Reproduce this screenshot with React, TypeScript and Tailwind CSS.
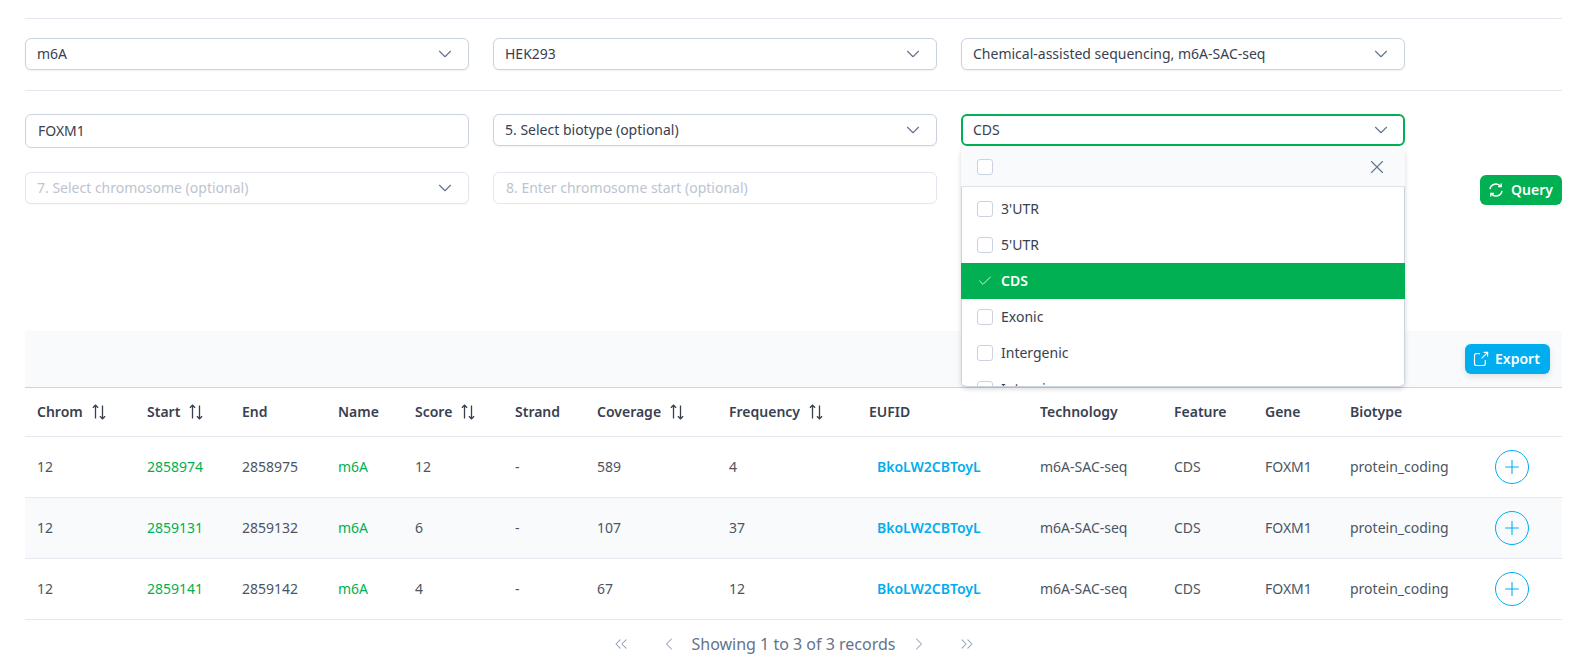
import { ChevronDown, ChevronLeft, ChevronRight, ChevronsLeft, ChevronsRight, Check, Plus, X } from "lucide-react";

const columns = [
    { label: "Chrom", width: 110, sort: true },
    { label: "Start", width: 95, sort: true },
    { label: "End", width: 96 },
    { label: "Name", width: 77 },
    { label: "Score", width: 100, sort: true },
    { label: "Strand", width: 82 },
    { label: "Coverage", width: 132, sort: true },
    { label: "Frequency", width: 140, sort: true },
    { label: "EUFID", width: 171 },
    { label: "Technology", width: 134 },
    { label: "Feature", width: 91 },
    { label: "Gene", width: 85 },
    { label: "Biotype", width: 132 },
    { label: "", width: 92 },
];

const rows = [
    { start: "2858974", end: "2858975", score: "12", coverage: "589", frequency: "4" },
    { start: "2859131", end: "2859132", score: "6", coverage: "107", frequency: "37" },
    { start: "2859141", end: "2859142", score: "4", coverage: "67", frequency: "12" },
];

const options = ["3'UTR", "5'UTR", "CDS", "Exonic", "Intergenic", "Intronic"];

function SortIcon() {
    return (
        <svg width="16" height="16" viewBox="0 0 16 16" fill="none" stroke="#374151" strokeWidth="1.3" className="ml-2 shrink-0">
            <path d="M4.5 14.5V1.2M1.9 3.8l2.6-2.6 2.6 2.6" />
            <path d="M11.5 1.5V14.8M8.9 12.2l2.6 2.6 2.6-2.6" />
        </svg>
    );
}

function SyncIcon() {
    return (
        <svg width="16" height="16" viewBox="0 0 16 16" fill="none" stroke="currentColor" strokeWidth="1.4" className="shrink-0">
            <path d="M2 7.2A6 6 0 0 1 12.6 4.2" />
            <path d="M13.2 1.4v3.2H10" />
            <path d="M14 8.8A6 6 0 0 1 3.4 11.8" />
            <path d="M2.8 14.6v-3.2H6" />
        </svg>
    );
}

function ExportIcon() {
    return (
        <svg width="16" height="16" viewBox="0 0 16 16" fill="none" stroke="currentColor" strokeWidth="1.2" className="shrink-0">
            <path d="M7 2.6H3.2A1.7 1.7 0 0 0 1.5 4.3v8.5a1.7 1.7 0 0 0 1.7 1.7h7.4a1.7 1.7 0 0 0 1.7-1.7V9" />
            <path d="M8.6 7.4 14.2 1.8M10.6 1.4h4v4" />
        </svg>
    );
}

function Select({ text, disabled, focused }: { text: string; disabled?: boolean; focused?: boolean }) {
    return (
        <div
            className={`flex h-8 w-[444px] items-center justify-between rounded-md bg-white text-sm ${
                focused
                    ? "border-2 border-[#00b052] pl-[10px] pr-[11px] text-[#374151]"
                    : disabled
                      ? "border border-[#e2e6ee] pl-[11px] pr-3 text-[#bcc4d1] shadow-[0_1px_2px_rgba(0,0,0,0.04)]"
                      : "border border-[#cbd2e0] pl-[11px] pr-3 text-[#374151] shadow-[0_1px_2px_rgba(0,0,0,0.06)]"
            }`}
        >
            <span>{text}</span>
            <ChevronDown size={22} strokeWidth={1.25} className="text-[#64748b]" />
        </div>
    );
}

function Box() {
    return <span className="h-4 w-4 shrink-0 rounded-[3px] border border-[#cbd2e0] bg-white" />;
}

function BiotypeMenu() {
    return (
        <div className="absolute left-0 top-[33px] z-10 h-[240px] w-[444px] overflow-hidden rounded-md border-b border-[#cbd2e0] bg-white text-sm text-[#374151] shadow-[0_2px_5px_rgba(0,0,0,0.16)]">
            <div className="flex h-[40px] items-center justify-between border-b border-[#dfe3ea] bg-[#f9fafc] pl-4 pr-[17px]">
                <Box />
                <X size={22} strokeWidth={1.25} className="text-[#64748b]" />
            </div>
            <div className="h-[200px] border-x border-[#cbd2e0] pt-1">
                {options.map((o) =>
                    o === "CDS" ? (
                        <div key={o} className="-mx-px flex h-9 items-center gap-2 bg-[#00b052] pl-4 font-semibold text-white">
                            <Check size={16} strokeWidth={1.25} />
                            {o}
                        </div>
                    ) : (
                        <div key={o} className="-ml-px flex h-9 items-center gap-2 pl-4">
                            <Box />
                            {o}
                        </div>
                    ),
                )}
            </div>
        </div>
    );
}

export default function App() {
    return (
        <div className="min-h-[670px] bg-white pl-[25px] pr-[26px] pt-[18px] font-['Noto_Sans',sans-serif] text-sm">
            <div className="flex gap-6 border-t border-[#e3e8f1] pb-5 pt-[19px]">
                <Select text="m6A" />
                <Select text="HEK293" />
                <Select text="Chemical-assisted sequencing, m6A-SAC-seq" />
            </div>

            <div className="border-t border-[#e3e8f1] pt-[23px]">
                <div className="flex items-start gap-6">
                    <div className="flex h-[34px] w-[444px] items-center rounded-md border border-[#cbd2e0] pl-3 text-[#374151]">FOXM1</div>
                    <Select text="5. Select biotype (optional)" />
                    <div className="relative">
                        <Select text="CDS" focused />
                        <BiotypeMenu />
                    </div>
                </div>
                <div className="mt-6 flex items-start gap-6">
                    <Select text="7. Select chromosome (optional)" disabled />
                    <div className="flex h-8 w-[444px] items-center rounded-md border border-[#e2e6ee] pl-3 text-[#bcc4d1]">
                        8. Enter chromosome start (optional)
                    </div>
                    <button className="ml-auto mt-[3px] flex h-[30px] w-[82px] items-center gap-[7px] rounded-md bg-[#00b052] pl-2 font-semibold text-white">
                        <SyncIcon />
                        Query
                    </button>
                </div>
            </div>

            <div className="mt-[126px] flex h-[57px] items-center justify-end border-b border-[#cbd2e0] bg-[#f9fafc] pr-[12px]">
                <button className="flex h-[30px] w-[85px] items-center gap-[6px] rounded-md bg-[#00adef] pl-2 font-semibold text-white shadow-[0_3px_6px_rgba(0,0,0,0.1)]">
                    <ExportIcon />
                    Export
                </button>
            </div>

            <table className="w-[1537px] table-fixed border-collapse">
                <colgroup>
                    {columns.map((c, i) => (
                        <col key={i} width={c.width} />
                    ))}
                </colgroup>
                <thead>
                    <tr className="h-[48px] border-b border-[#e3e8f1]">
                        {columns.map((c, i) => (
                            <th key={i} className="px-3 text-left font-semibold text-[#374151]">
                                <span className="flex items-center">
                                    {c.label}
                                    {c.sort && <SortIcon />}
                                </span>
                            </th>
                        ))}
                    </tr>
                </thead>
                <tbody className="text-[#4b5563]">
                    {rows.map((r, i) => (
                        <tr key={r.start} className={`h-[61px] border-b border-[#e3e8f1] ${i === 1 ? "bg-[#f9fafc]" : ""}`}>
                            <td className="px-3">12</td>
                            <td className="px-3 text-[#00b052]">{r.start}</td>
                            <td className="px-3">{r.end}</td>
                            <td className="px-3 text-[#00b052]">m6A</td>
                            <td className="px-3">{r.score}</td>
                            <td className="px-3">-</td>
                            <td className="px-3">{r.coverage}</td>
                            <td className="px-3">{r.frequency}</td>
                            <td className="pl-5 pr-3 font-semibold text-[#00adef]">BkoLW2CBToyL</td>
                            <td className="px-3">m6A-SAC-seq</td>
                            <td className="px-3">CDS</td>
                            <td className="px-3">FOXM1</td>
                            <td className="px-3">protein_coding</td>
                            <td className="px-3">
                                <button className="ml-[13px] flex h-[34px] w-[34px] items-center justify-center rounded-full border border-[#00adef] text-[#00adef]">
                                    <Plus size={22} strokeWidth={1.2} />
                                </button>
                            </td>
                        </tr>
                    ))}
                </tbody>
            </table>

            <div className="mt-[8px] flex h-8 items-center justify-center text-[#64748b]">
                <ChevronsLeft size={20} strokeWidth={1.25} className="mr-[28px] text-[#94a3b8]" />
                <ChevronLeft size={20} strokeWidth={1.25} className="mr-[13px] text-[#94a3b8]" />
                <span className="text-base">Showing 1 to 3 of 3 records</span>
                <ChevronRight size={20} strokeWidth={1.25} className="ml-[13px] text-[#94a3b8]" />
                <ChevronsRight size={20} strokeWidth={1.25} className="ml-[28px] text-[#94a3b8]" />
            </div>
        </div>
    );
}
